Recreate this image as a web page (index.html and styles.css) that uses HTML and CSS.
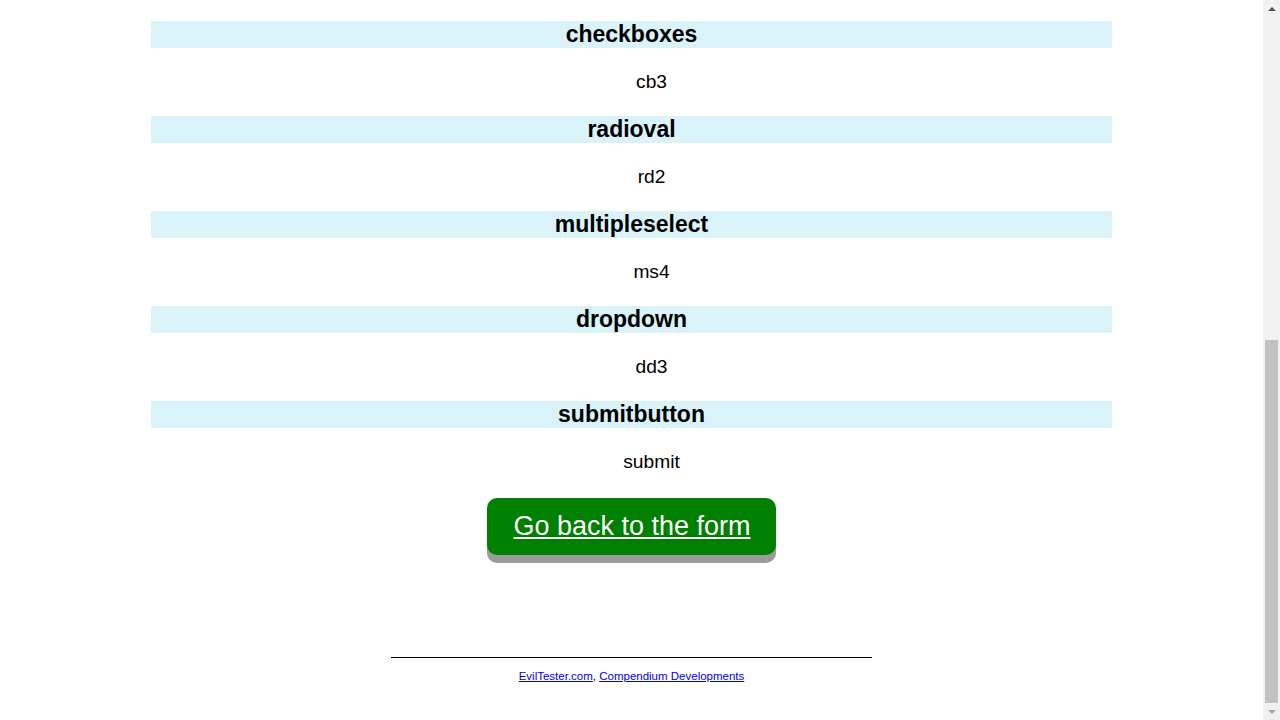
FILE: index.html
```html
<!DOCTYPE html>
<html>
<head>
<meta charset="utf-8">
<title>Processed Form Details</title>
<link rel="stylesheet" href="styles.css">
</head>
<body>
<div class="window">
  <main class="page">
    <section class="entry">
      <div class="label">checkboxes</div>
      <ul class="values"><li>cb3</li></ul>
    </section>
    <section class="entry">
      <div class="label">radioval</div>
      <ul class="values"><li>rd2</li></ul>
    </section>
    <section class="entry">
      <div class="label">multipleselect</div>
      <ul class="values"><li>ms4</li></ul>
    </section>
    <section class="entry">
      <div class="label">dropdown</div>
      <ul class="values"><li>dd3</li></ul>
    </section>
    <section class="entry">
      <div class="label">submitbutton</div>
      <ul class="values"><li>submit</li></ul>
    </section>
    <div class="back-row">
      <a class="back-btn" href="#">Go back to the form</a>
    </div>
    <footer class="footer">
      <hr class="rule">
      <p class="links"><a href="#">EvilTester.com</a>, <a href="#">Compendium Developments</a></p>
    </footer>
  </main>
  <aside class="scrollbar">
    <div class="arrow arrow-up"></div>
    <div class="track"><div class="thumb"></div></div>
    <div class="arrow arrow-down"></div>
  </aside>
</div>
</body>
</html>
```
FILE: styles.css
```css
html, body {
  margin: 0;
  padding: 0;
  height: 720px;
  overflow: hidden;
  background: #ffffff;
  font-family: "Liberation Sans", Arial, sans-serif;
  color: #000;
}

.window {
  display: flex;
  width: 1280px;
  height: 720px;
}

.page {
  flex: 1;
  display: flex;
  flex-direction: column;
  align-items: center;
  padding-top: 21px;
}

.entry {
  width: 961px;
}

.label {
  background: #d9f3f9;
  height: 27px;
  line-height: 27px;
  font-size: 23px;
  font-weight: bold;
  text-align: center;
}

.values {
  list-style: none;
  margin: 0;
  padding: 23px 0 23px 40px;
  text-align: center;
  font-size: 19.2px;
  line-height: 22px;
}

.back-row {
  margin-top: 2px;
  display: flex;
  justify-content: center;
}

.back-btn {
  display: block;
  background: #008000;
  color: #ffffff;
  font-size: 27px;
  line-height: 31px;
  padding: 13px 25px 13px 26px;
  border-radius: 10px;
  box-shadow: 0 8px 0 #9b9b9b;
  text-decoration: underline;
  text-underline-offset: 2px;
}

.footer {
  margin-top: 102px;
  display: flex;
  flex-direction: column;
  align-items: center;
}

.rule {
  width: 481px;
  margin: 0;
  border: 0;
  border-top: 1px solid #000;
}

.links {
  margin: 11px 0 0;
  font-size: 11.5px;
  line-height: 14px;
}

.links a {
  color: #0000ee;
}

.scrollbar {
  width: 17px;
  background: #f1f1f1;
  display: flex;
  flex-direction: column;
}

.arrow {
  height: 17px;
  display: flex;
  align-items: center;
  justify-content: center;
}

.arrow-up::before {
  content: "";
  border-left: 4px solid transparent;
  border-right: 4px solid transparent;
  border-bottom: 4px solid #505050;
}

.arrow-down::before {
  content: "";
  border-left: 4px solid transparent;
  border-right: 4px solid transparent;
  border-top: 4px solid #a3a3a3;
}

.track {
  flex: 1;
  display: flex;
  flex-direction: column;
  justify-content: flex-end;
  padding: 0 2px;
}

.thumb {
  height: 363px;
  background: #c1c1c1;
}
```
